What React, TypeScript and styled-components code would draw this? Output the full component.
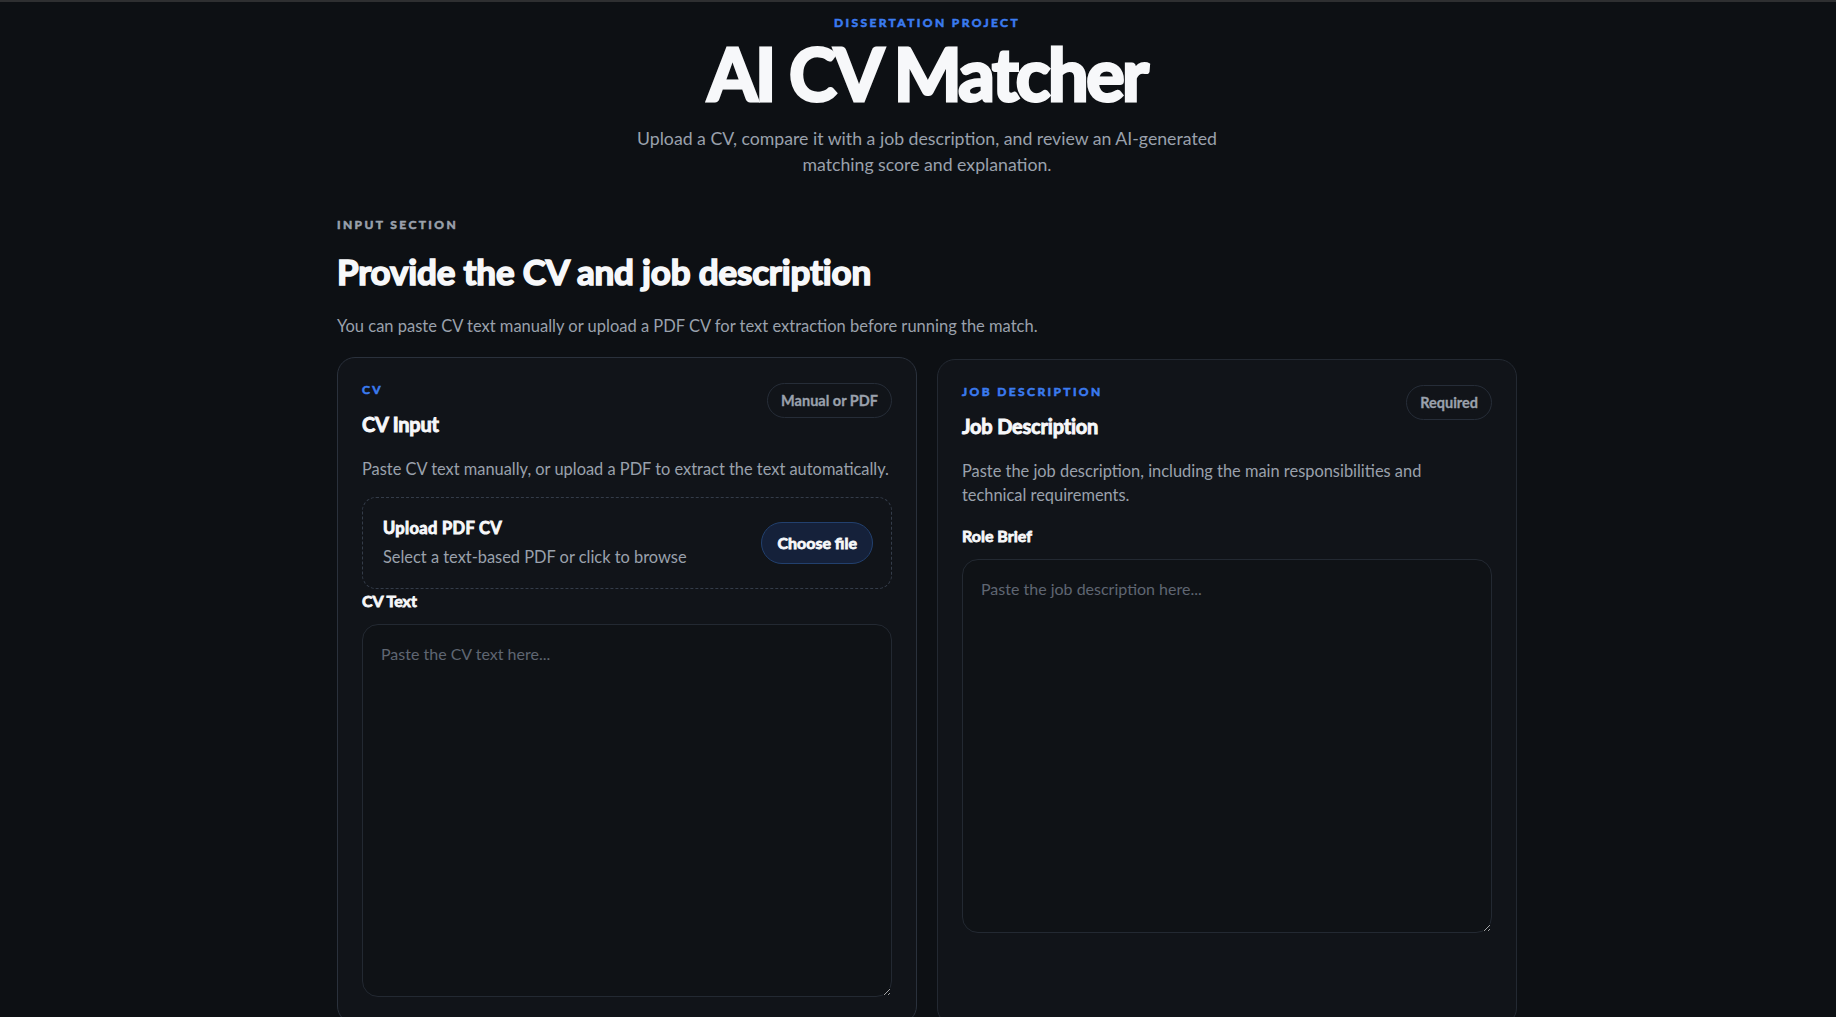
import React from 'react'
import styled, { createGlobalStyle } from 'styled-components'

const GlobalStyle = createGlobalStyle`
  html, body {
    margin: 0;
    padding: 0;
    background: #0d1014;
  }
  body {
    border-top: 2px solid #2e2f31;
    font-family: Lato, 'Open Sans', sans-serif;
    color: #f5f7fa;
  }
  * { box-sizing: border-box; }
`

// Lato has no heavy cut here, so the headings get a thin stroke to match the reference weight
const heavy = (w: number) => `
  font-weight: 700;
  -webkit-text-stroke: ${w}px currentColor;
`

const Page = styled.main`
  width: 1180px;
  margin: 0 auto;
  padding: 13px 0 0;
  position: relative;
  left: 9px;
`

const Hero = styled.header`
  display: flex;
  flex-direction: column;
  align-items: center;
  text-align: center;
`

const Eyebrow = styled.div<{ tone?: 'blue' | 'gray' }>`
  font-size: 12px;
  ${heavy(0.6)}
  letter-spacing: 0.2em;
  text-transform: uppercase;
  color: ${(p) => (p.tone === 'gray' ? '#9aa1ac' : '#3b7bf0')};
  line-height: 16px;
`

const Title = styled.h1`
  margin: 2px 0 0;
  font-size: 72px;
  ${heavy(3)}
  letter-spacing: -0.035em;
  line-height: 80px;
  color: #f7f8fa;
`

const Lead = styled.p`
  margin: 13px 0 0;
  max-width: 620px;
  font-size: 17.7px;
  line-height: 26px;
  color: #9aa1ac;
`

const Section = styled.section`
  margin-top: 39px;
`

const SectionTitle = styled.h2`
  margin: 16px 0 0;
  font-size: 35px;
  ${heavy(1.6)}
  letter-spacing: -0.005em;
  line-height: 44px;
  color: #f7f8fa;
`

const SectionText = styled.p`
  margin: 22px 0 0;
  font-size: 16.5px;
  line-height: 22px;
  color: #9aa1ac;
`

const Grid = styled.div`
  display: grid;
  grid-template-columns: 1fr 1fr;
  gap: 20px;
  margin-top: 22px;
  align-items: stretch;
`

const Card = styled.div<{ lifted?: boolean }>`
  background: #111419;
  border: 1px solid ${(p) => (p.lifted ? '#2a313c' : '#232932')};
  border-radius: 18px;
  padding: 24px 24px 26px;
  display: flex;
  flex-direction: column;
  transform: translateY(${(p) => (p.lifted ? '-2px' : '0')});
`

const CardHead = styled.div`
  display: flex;
  justify-content: space-between;
  align-items: flex-start;
`

const CardTitle = styled.h3`
  margin: 14px 0 0;
  font-size: 20px;
  ${heavy(0.9)}
  letter-spacing: -0.01em;
  line-height: 24px;
  color: #f7f8fa;
`

const Badge = styled.span`
  display: inline-flex;
  align-items: center;
  height: 35px;
  padding: 0 13px;
  margin-top: 1px;
  border: 1px solid #262d38;
  border-radius: 999px;
  font-size: 14.5px;
  ${heavy(0.3)}
  color: #9aa1ac;
`

const CardText = styled.p`
  margin: 21px 0 0;
  font-size: 16.4px;
  line-height: 24px;
  color: #9aa1ac;
  text-wrap: pretty;
`

const Dropzone = styled.div`
  margin-top: 16px;
  display: flex;
  align-items: center;
  justify-content: space-between;
  padding: 20px 18px 21px 20px;
  border: 1.5px dashed #343c49;
  border-radius: 14px;
`

const DropTitle = styled.div`
  font-size: 16.5px;
  ${heavy(0.9)}
  letter-spacing: 0.02em;
  line-height: 20px;
  color: #f7f8fa;
`

const DropHint = styled.div`
  margin-top: 9px;
  font-size: 16.4px;
  line-height: 20px;
  color: #9aa1ac;
`

const ChooseButton = styled.button`
  height: 42px;
  padding: 0 15px;
  border-radius: 999px;
  border: 1px solid #22406e;
  background: #15213a;
  color: #f7f8fa;
  font-family: inherit;
  font-size: 16px;
  ${heavy(0.8)}
`

const FieldLabel = styled.label<{ gap?: number }>`
  display: block;
  margin-top: ${(p) => p.gap ?? 18}px;
  font-size: 16px;
  ${heavy(0.8)}
  line-height: 20px;
  color: #f7f8fa;
`

const TextArea = styled.textarea<{ rowsHeight: number }>`
  display: block;
  width: 100%;
  height: ${(p) => p.rowsHeight}px;
  margin-top: 13px;
  padding: 18px 18px;
  background: #0f1216;
  border: 1px solid #232932;
  border-radius: 16px;
  color: #f7f8fa;
  font-family: inherit;
  font-size: 16px;
  line-height: 22px;
  resize: vertical;
  outline: none;
  &::placeholder {
    color: #5f6672;
  }
`

export default function App() {
  return (
    <>
      <GlobalStyle />
      <Page>
        <Hero>
          <Eyebrow>Dissertation Project</Eyebrow>
          <Title>AI CV Matcher</Title>
          <Lead>
            Upload a CV, compare it with a job description, and review an AI-generated
            matching score and explanation.
          </Lead>
        </Hero>

        <Section>
          <Eyebrow tone="gray">Input Section</Eyebrow>
          <SectionTitle>Provide the CV and job description</SectionTitle>
          <SectionText>
            You can paste CV text manually or upload a PDF CV for text extraction before
            running the match.
          </SectionText>

          <Grid>
            {/* cv card */}
            <Card lifted>
              <CardHead>
                <div>
                  <Eyebrow>CV</Eyebrow>
                  <CardTitle>CV Input</CardTitle>
                </div>
                <Badge>Manual or PDF</Badge>
              </CardHead>
              <CardText>
                Paste CV text manually, or upload a PDF to extract the text automatically.
              </CardText>
              <Dropzone>
                <div>
                  <DropTitle>Upload PDF CV</DropTitle>
                  <DropHint>Select a text-based PDF or click to browse</DropHint>
                </div>
                <ChooseButton type="button">Choose file</ChooseButton>
              </Dropzone>
              <FieldLabel gap={2}>CV Text</FieldLabel>
              <TextArea rowsHeight={373} placeholder="Paste the CV text here..." />
            </Card>

            {/* job description card */}
            <Card>
              <CardHead>
                <div>
                  <Eyebrow>Job Description</Eyebrow>
                  <CardTitle>Job Description</CardTitle>
                </div>
                <Badge>Required</Badge>
              </CardHead>
              <CardText>
                Paste the job description, including the main responsibilities and
                technical requirements.
              </CardText>
              <FieldLabel gap={19}>Role Brief</FieldLabel>
              <TextArea rowsHeight={374} placeholder="Paste the job description here..." />
            </Card>
          </Grid>
        </Section>
      </Page>
    </>
  )
}
